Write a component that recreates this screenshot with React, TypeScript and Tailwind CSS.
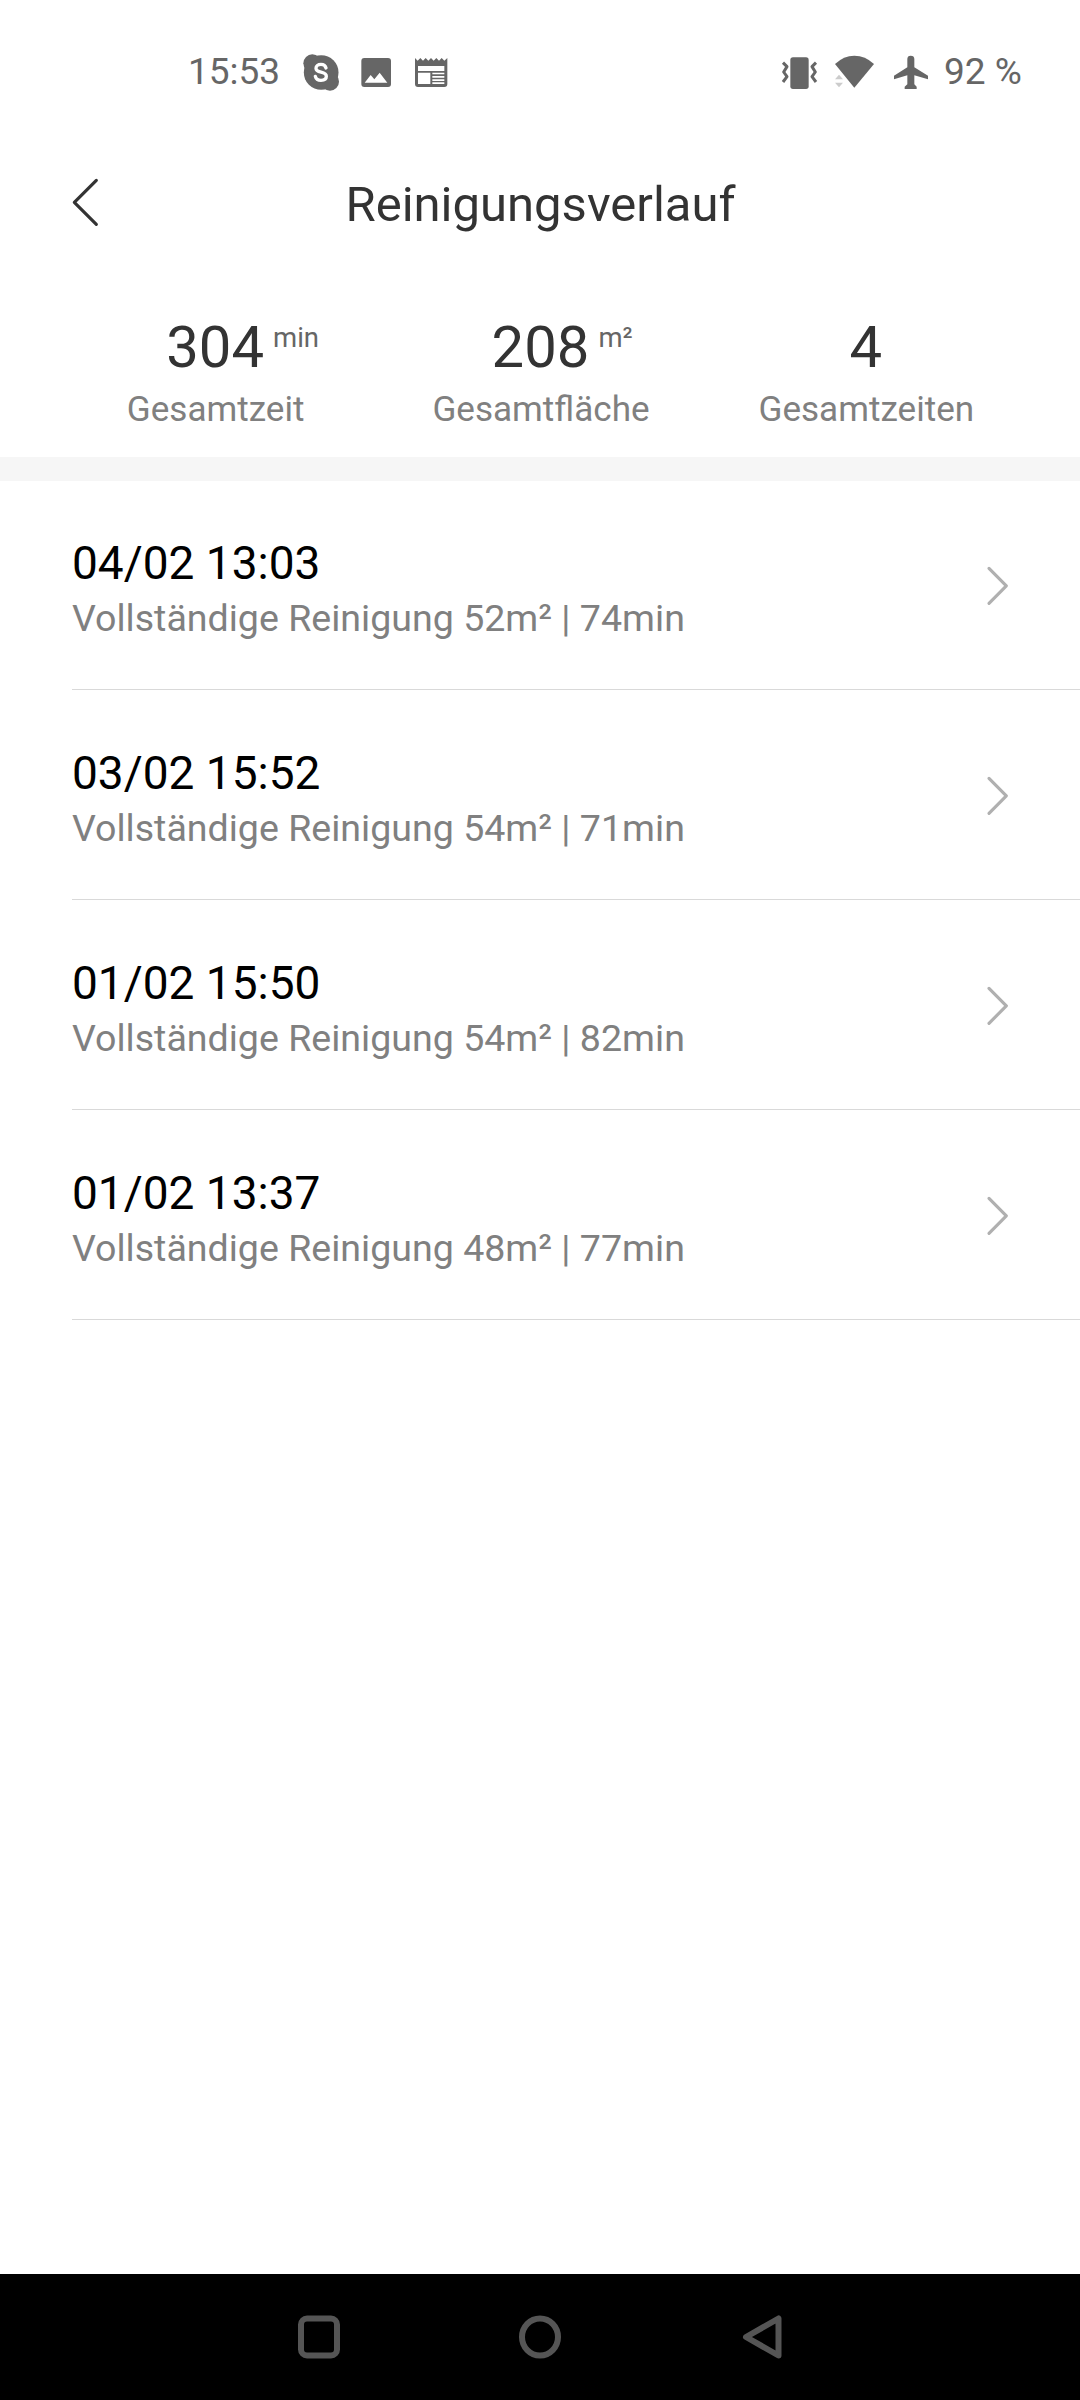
const stats = [
  { value: "304", unit: "min", label: "Gesamtzeit" },
  { value: "208", unit: "m²", label: "Gesamtfläche" },
  { value: "4", unit: "", label: "Gesamtzeiten" },
];

const runs = [
  { date: "04/02 13:03", area: 52, minutes: 74 },
  { date: "03/02 15:52", area: 54, minutes: 71 },
  { date: "01/02 15:50", area: 54, minutes: 82 },
  { date: "01/02 13:37", area: 48, minutes: 77 },
];

function SkypeIcon() {
  return (
    <svg className="size-10 shrink-0" viewBox="393 36 120 120" fill="#666">
      <circle cx="453.500" cy="97.500" r="52" />
      <circle cx="427" cy="70" r="27" />
      <circle cx="480" cy="125" r="27" />
      <path
        d="M468 84C466 76 460 73 453 73C444 73 438 78 438 85C438 102 469 91 469 109C469 117 462 121 453 121C444 121 438 117 436 109"
        fill="none"
        stroke="#fff"
        strokeWidth="10"
        strokeLinecap="round"
      />
    </svg>
  );
}

function ImageIcon() {
  return (
    <svg className="size-10 shrink-0" viewBox="558 36 120 120">
      <rect x="574" y="54" width="89" height="87" rx="9" fill="#666" />
      <path d="M584 128L602 105L613 118L629 98L652 128Z" fill="#fff" />
    </svg>
  );
}

function NewsIcon() {
  return (
    <svg className="size-10 shrink-0" viewBox="723 36 120 120">
      <path
        d="M735 54L743 62L751 54L759 62L767 54L775 62L783 54L791 62L799 54L807 62L815 54L823 62L832 54V132Q832 141 823 141H744Q735 141 735 132Z"
        fill="#666"
      />
      <path
        d="M744 78H823V93H744ZM744 98H781V132H744ZM787 98H823V103H787ZM787 108H823V113H787ZM787 118H823V123H787ZM787 127H823V132H787Z"
        fill="#fff"
      />
    </svg>
  );
}

function VibrateIcon() {
  return (
    <svg className="size-10 shrink-0" viewBox="60 36 120 120">
      <rect x="91" y="52" width="55" height="95" rx="8" fill="#666" />
      <path
        d="M69 68L81 80L71 96L81 110L69 126M168 68L156 80L166 96L156 110L168 126"
        fill="none"
        stroke="#666"
        strokeWidth="9"
        strokeLinejoin="round"
      />
    </svg>
  );
}

function WifiIcon() {
  return (
    <svg className="size-10 shrink-0" viewBox="222 36 120 120">
      <path d="M225 72Q251 47 283 47Q316 47 342 72L283 143Z" fill="#666" />
      <path d="M225 118L237 104L249 118ZM225 128H249L237 142Z" fill="#ccc" />
    </svg>
  );
}

function PlaneIcon() {
  return (
    <svg className="size-10 shrink-0" viewBox="393 36 120 120">
      <path
        d="M442 57Q442 47 452 47Q463 47 463 57V82L504 107V118L463 106V133L470 140V147H434V140L442 133V106L402 118V107L442 82Z"
        fill="#666"
      />
    </svg>
  );
}

function StatusBar() {
  return (
    <div className="flex h-36 items-center pl-[188px] text-[37px] leading-[40px] text-[#666]">
      <span className="w-[113px] whitespace-nowrap pb-px">15:53</span>
      <div className="flex gap-[15px]">
        <SkypeIcon />
        <ImageIcon />
        <NewsIcon />
      </div>
      <div className="ml-[329px] flex items-center">
        <VibrateIcon />
        <div className="w-[14px]" />
        <WifiIcon />
        <div className="w-[17px]" />
        <PlaneIcon />
        <span className="ml-[13px] whitespace-nowrap pb-px">92 %</span>
      </div>
    </div>
  );
}

function Header() {
  return (
    <header className="grid h-[120px] grid-cols-[68px_1fr_68px] items-center text-[#333]">
      <svg className="mb-1 ml-[68px] h-[60px] w-9" viewBox="54 36 108 180">
        <path
          d="M139 61L73 127L139 193"
          fill="none"
          stroke="#333"
          strokeWidth="9.500"
          strokeLinecap="round"
          strokeLinejoin="round"
        />
      </svg>
      <h1 className="pl-px pt-0.5 text-center text-[49px] leading-[60px]">Reinigungsverlauf</h1>
    </header>
  );
}

function Stats() {
  return (
    <section className="grid h-[193px] grid-cols-3 content-start pl-[53px] pr-[51px] pt-[47px] text-center">
      {stats.map((s) => (
        <div key={s.label}>
          <div className="pr-px text-[58px] leading-[72px] text-[#333]">
            <span className="relative">
              {s.value}
              <span className="absolute left-full top-0 ml-[9px] mt-[9px] text-[27.5px] leading-8 text-[#666]">
                {s.unit}
              </span>
            </span>
          </div>
          <div className="mt-1 text-[35.1px] leading-[44px] text-[#808080]">{s.label}</div>
        </div>
      ))}
    </section>
  );
}

export default function App() {
  return (
    <div className="flex h-[2400px] w-[1080px] flex-col overflow-hidden bg-white font-[Roboto,sans-serif]">
      <StatusBar />
      <Header />
      <Stats />
      <div className="h-6 bg-[#f6f6f6]" />
      <ul className="-mt-px pl-[72px]">
        {runs.map((r) => (
          <li
            key={r.date}
            className="flex h-[210px] items-start justify-between border-b border-[#d9d9d9] pr-16"
          >
            <div className="pt-[56px]">
              <div className="text-[46px] leading-[54px] text-black">{r.date}</div>
              <div className="mt-1 text-[37.55px] leading-[48px] text-[#808080]">
                Vollständige Reinigung {r.area}m² | {r.minutes}min
              </div>
            </div>
            <svg className="mt-[76px] h-[60px] w-9" viewBox="120 48 108 180">
              <path
                d="M147 85L199 137.500L147 190"
                fill="none"
                stroke="#b0b0b0"
                strokeWidth="9.500"
                strokeLinecap="round"
                strokeLinejoin="round"
              />
            </svg>
          </li>
        ))}
      </ul>
      <nav className="mt-auto flex h-[126px] items-center justify-between bg-black px-[297px]">
        <svg className="h-12 w-11" viewBox="0 0 44 48" fill="none" stroke="#555" strokeWidth="6">
          <rect x="4" y="5.500" width="36" height="37" rx="6" />
        </svg>
        <svg className="h-12 w-11" viewBox="0 0 44 48" fill="none" stroke="#555" strokeWidth="6">
          <ellipse cx="22" cy="24" rx="18" ry="18.500" />
        </svg>
        <svg
          className="h-12 w-11"
          viewBox="0 0 44 48"
          fill="none"
          stroke="#555"
          strokeWidth="6"
          strokeLinejoin="round"
        >
          <path d="M39.500 5.500V42.500L7 24Z" />
        </svg>
      </nav>
    </div>
  );
}
